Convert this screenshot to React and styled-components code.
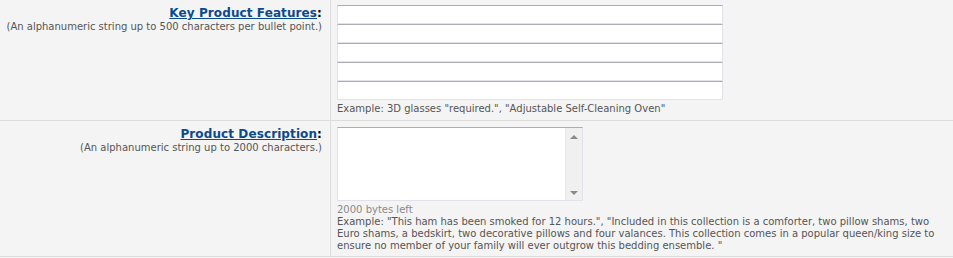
import React from 'react'
import styled, {createGlobalStyle} from 'styled-components'

const Global = createGlobalStyle`
    body {
        margin          : 0;
        background      : #f4f4f4;
        font-family     : "DejaVu Sans", Verdana, sans-serif;
    }
`

const Table = styled.div`
    display         : flex;
    flex-direction  : column;
    width           : 953px;
    background      : #f4f4f4;
`

const Row = styled.div`
    display         : grid;
    grid-template-columns : 331px 1fr;
    border-bottom   : 1px solid #dcdcdc;
    height          : ${p=>p.height};
`

const LabelCell = styled.div`
    border-right    : 1px solid #dcdcdc;
    text-align      : right;
    padding         : 6px 8px 0 0;
`

const Title = styled.div`
    font-size       : 12px;
    font-weight     : bold;
    line-height     : 15px;
    letter-spacing  : 0.1px;
    color           : #000;
    a {
        color           : #0b4a8c;
        text-decoration : underline;
    }
`

const Hint = styled.div`
    font-size       : 10px;
    line-height     : 12px;
    color           : #555;
`

const ValueCell = styled.div`
    padding         : 5px 0 0 6px;
    display         : flex;
    flex-direction  : column;
    align-items     : flex-start;
`

const Input = styled.input`
    box-sizing      : border-box;
    width           : 386px;
    height          : 19px;
    margin          : 0;
    padding         : 1px 3px;
    border          : 1px solid #e2e3ea;
    border-top-color: #abadb3;
    background      : #fff;
    outline         : none;
`

const Note = styled.div`
    font-size       : 10px;
    line-height     : 12px;
    color           : ${p=>p.mcolor ?? '#555'};
    margin          : ${p=>p.margin ?? '0'};
    width           : ${p=>p.width ?? 'auto'};
`

const AreaBox = styled.div`
    display         : flex;
    box-sizing      : border-box;
    width           : 246px;
    height          : 74px;
    border          : 1px solid #e2e3ea;
    border-top-color: #abadb3;
    background      : #fff;
    margin          : 1px 0 0;
`

const Area = styled.textarea`
    flex            : 1;
    border          : none;
    outline         : none;
    resize          : none;
    margin          : 0;
    padding         : 2px;
    overflow        : hidden;
`

const Scroll = styled.div`
    width           : 16px;
    background      : #f0f0f0;
    border-left     : 1px solid #e6e6e6;
    display         : flex;
    flex-direction  : column;
    justify-content : space-between;
    align-items     : center;
    padding         : 7px 0 5px;
`

const Arrow = styled.div`
    width           : 0;
    height          : 0;
    border-left     : 4px solid transparent;
    border-right    : 4px solid transparent;
    ${p=>p.down
        ? 'border-top: 4px solid #8a8a8a;'
        : 'border-bottom: 4px solid #8a8a8a;'}
`

const Field = ({title, hint, height, children}) => <Row height={height}>
    <LabelCell>
        <Title><a>{title}</a>:</Title>
        <Hint>{hint}</Hint>
    </LabelCell>
    <ValueCell>{children}</ValueCell>
</Row>

const App = () => <>
    <Global/>
    <Table>
        <Field title='Key Product Features' hint='(An alphanumeric string up to 500 characters per bullet point.)' height='120px'>
            {[0,1,2,3,4].map(i=><Input key={i}/>)}
            <Note margin='3px 0 0'>Example: 3D glasses "required.", "Adjustable Self-Cleaning Oven"</Note>
        </Field>
        <Field title='Product Description' hint='(An alphanumeric string up to 2000 characters.)' height='135px'>
            <AreaBox>
                <Area/>
                <Scroll><Arrow/><Arrow down/></Scroll>
            </AreaBox>
            <Note mcolor='#8a8a8a' margin='3px 0 0'>2000 bytes left</Note>
            <Note width='605px'>Example: "This ham has been smoked for 12 hours.", "Included in this collection is a comforter, two pillow shams, two Euro shams, a bedskirt, two decorative pillows and four valances. This collection comes in a popular queen/king size to ensure no member of your family will ever outgrow this bedding ensemble. "</Note>
        </Field>
    </Table>
</>

export default App
